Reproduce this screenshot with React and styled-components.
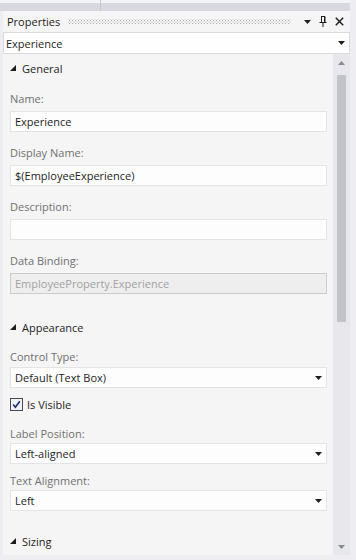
import React from "react";
import styled, { createGlobalStyle } from "styled-components";

const GlobalStyle = createGlobalStyle`
  html, body {
    margin: 0;
    padding: 0;
    background: #eeeef2;
  }
  body {
    font-family: "Open Sans", "Noto Sans", sans-serif;
    font-size: 11px;
    color: #1e1e1e;
  }
`;

const Frame = styled.div`
  width: 356px;
  height: 560px;
  background: #eeeef2;
  display: flex;
  flex-direction: column;
  overflow: hidden;
`;

const TabStrip = styled.div`
  height: 11px;
  flex: none;
  display: flex;
  margin-right: 6px;
  background: linear-gradient(#f4f4f6 0 3px, #d8d9e0 3px);
`;

const TabEdge = styled.div`
  width: ${(p) => p.width}px;
  border-right: 1px solid #c6c7cc;
`;

const Panel = styled.div`
  margin-left: 3px;
  width: 347px;
  height: 544px;
  display: flex;
  flex-direction: column;
  background: #f5f5f5;
`;

const TitleBar = styled.div`
  height: 21px;
  flex: none;
  display: flex;
  align-items: center;
  padding: 0 6px 0 4px;
  gap: 6px;
`;

const TitleText = styled.span`
  color: #1e1e1e;
`;

const Grip = styled.div`
  flex: 1;
  height: 5px;
  margin: 0 6px 0 2px;
  background-image: radial-gradient(circle, #a9a9ae 0.6px, transparent 0.9px),
    radial-gradient(circle, #a9a9ae 0.6px, transparent 0.9px);
  background-size: 3px 3px, 3px 3px;
  background-position: 0 0, 1.5px 1.5px;
`;

const TitleIcon = styled.span`
  display: flex;
  align-items: center;
  justify-content: center;
  width: ${(p) => p.w || 12}px;
  height: 14px;
`;

const ObjectSelector = styled.div`
  height: 22px;
  flex: none;
  box-sizing: border-box;
  display: flex;
  align-items: center;
  justify-content: space-between;
  padding: 0 4px 0 2px;
  background: #fefefe;
  border: 1px solid #dadade;
`;

const Body = styled.div`
  flex: 1;
  display: flex;
  min-height: 0;
`;

const Content = styled.div`
  flex: 1;
  padding: 5px 6px 0 7px;
  overflow: hidden;
`;

const SectionHeader = styled.div`
  display: flex;
  align-items: center;
  height: 18px;
  margin-top: ${(p) => p.mt || 0}px;
  color: #1e1e1e;
  svg {
    margin-right: 6px;
  }
`;

const Label = styled.div`
  height: 18px;
  line-height: 18px;
  margin-top: ${(p) => p.mt || 0}px;
  color: #717171;
`;

const Box = styled.div`
  height: 21px;
  box-sizing: border-box;
  margin-top: ${(p) => p.mt || 0}px;
  display: flex;
  align-items: center;
  justify-content: space-between;
  padding: 0 4px;
  background: ${(p) => (p.disabled ? "#eeeeee" : "#fdfdfd")};
  border: 1px solid ${(p) => (p.disabled ? "#cbcbcb" : "#e4e4e6")};
  color: ${(p) => (p.disabled ? "#a2a2a2" : "#1e1e1e")};
`;

const CheckRow = styled.div`
  display: flex;
  align-items: center;
  gap: 4px;
  height: 18px;
  margin-top: ${(p) => p.mt || 0}px;
  color: #1e1e1e;
`;

const ScrollBar = styled.div`
  width: 17px;
  flex: none;
  display: flex;
  flex-direction: column;
  background: #e8e8ec;
`;

const ScrollArrow = styled.div`
  height: 17px;
  flex: none;
  display: flex;
  align-items: center;
  justify-content: center;
`;

const Thumb = styled.div`
  margin: 4px 4px 0 4px;
  height: 247px;
  border-radius: 1px;
  background: #c2c3c9;
`;

const Spacer = styled.div`
  flex: 1;
`;

const DownArrow = ({ color = "#1e1e1e" }) => (
  <svg width="7" height="4" viewBox="0 0 7 4">
    <path d="M0 0H7L3.5 4Z" fill={color} />
  </svg>
);

const UpArrow = ({ color = "#868999" }) => (
  <svg width="7" height="4" viewBox="0 0 7 4">
    <path d="M0 4H7L3.5 0Z" fill={color} />
  </svg>
);

const Expanded = () => (
  <svg width="6" height="6" viewBox="0 0 6 6">
    <path d="M6 0V6H0Z" fill="#1e1e1e" />
  </svg>
);

const PinIcon = () => (
  <svg width="8" height="11" viewBox="0 0 8 11">
    <path d="M2 0.5H6M2.5 0.5V6M5.5 0.5V6M0.5 6.5H7.5M4 6.5V11" stroke="#1e1e1e" strokeWidth="1" fill="none" />
    <rect x="5" y="0.5" width="1.5" height="6" fill="#1e1e1e" />
  </svg>
);

const CloseIcon = () => (
  <svg width="9" height="9" viewBox="0 0 9 9">
    <path d="M0.8 0.8L8.2 8.2M8.2 0.8L0.8 8.2" stroke="#1e1e1e" strokeWidth="1.5" />
  </svg>
);

const CheckBox = () => (
  <svg width="13" height="13" viewBox="0 0 13 13">
    <rect x="0.5" y="0.5" width="12" height="12" fill="#eef1f9" stroke="#4a4a54" />
    <path d="M3.2 6.6L5.4 9.2L9.8 3.2" stroke="#1c2a6b" strokeWidth="1.6" fill="none" />
  </svg>
);

const TextField = ({ label, value, mt, disabled }) => (
  <>
    <Label mt={mt}>{label}</Label>
    <Box mt={3} disabled={disabled}>
      <span>{value}</span>
    </Box>
  </>
);

const SelectField = ({ label, value, mt, gap }) => (
  <>
    <Label mt={mt}>{label}</Label>
    <Box mt={gap}>
      <span>{value}</span>
      <DownArrow />
    </Box>
  </>
);

const App = () => (
  <Frame>
    <GlobalStyle />
    <TabStrip>
      <TabEdge width={100} />
    </TabStrip>
    <Panel>
      <TitleBar>
        <TitleText>Properties</TitleText>
        <Grip />
        <TitleIcon w={9}>
          <DownArrow />
        </TitleIcon>
        <TitleIcon w={10}>
          <PinIcon />
        </TitleIcon>
        <TitleIcon w={10}>
          <CloseIcon />
        </TitleIcon>
      </TitleBar>
      <ObjectSelector>
        <span>Experience</span>
        <DownArrow />
      </ObjectSelector>
      <Body>
        <Content>
          <SectionHeader>
            <Expanded />
            General
          </SectionHeader>
          <TextField label="Name:" value="Experience" mt={13} />
          <TextField label="Display Name:" value="$(EmployeeExperience)" mt={12} />
          <TextField label="Description:" value="" mt={12} />
          <TextField label="Data Binding:" value="EmployeeProperty.Experience" mt={12} disabled />

          <SectionHeader mt={24}>
            <Expanded />
            Appearance
          </SectionHeader>
          <SelectField label="Control Type:" value="Default (Text Box)" mt={12} gap={1} />
          <CheckRow mt={7}>
            <CheckBox />
            Is Visible
          </CheckRow>
          <SelectField label="Label Position:" value="Left-aligned" mt={12} gap={0} />
          <SelectField label="Text Alignment:" value="Left" mt={8} gap={0} />

          <SectionHeader mt={21}>
            <Expanded />
            Sizing
          </SectionHeader>
        </Content>
        <ScrollBar>
          <ScrollArrow>
            <UpArrow />
          </ScrollArrow>
          <Thumb />
          <Spacer />
          <ScrollArrow>
            <DownArrow color="#868999" />
          </ScrollArrow>
        </ScrollBar>
      </Body>
    </Panel>
  </Frame>
);

export default App;
